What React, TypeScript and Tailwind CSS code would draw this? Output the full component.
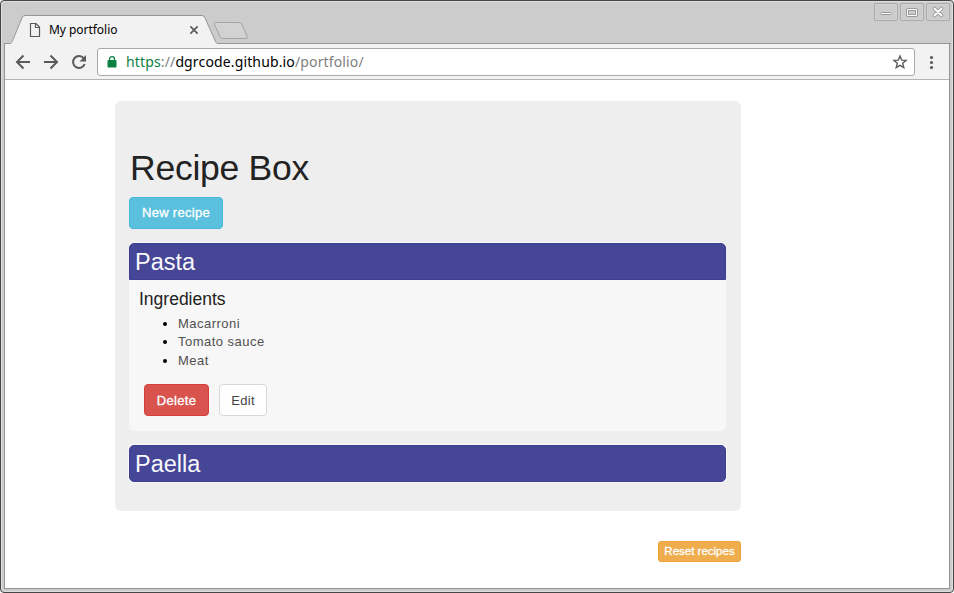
import React from 'react';

function WindowButton({ children }: { children: React.ReactNode }) {
  return (
    <div className="flex h-[18px] w-6 items-center justify-center rounded-[2px] border border-[#aaa] bg-[#ccc] shadow-[inset_0_0_0_1px_#d2d2d2]">
      <svg width="22" height="16" viewBox="0 0 22 16" fill="none">{children}</svg>
    </div>
  );
}

function TabStrip() {
  return (
    <div className="relative h-[43px] shrink-0 bg-[#ccc]">
      <svg className="absolute left-0 top-0" width="954" height="44" fill="none">
        <path d="M4 43.5H10.5L22.2 17.5Q23 15.5 25 15.5H202Q204 15.5 204.8 17.5L215.5 41.5Q216.2 43.5 218 43.5H951V44.5H4Z" fill="#f2f2f2" />
        <path d="M4 43.5H10Q11.500 43 12.200 41.500L22.200 17.500Q23 15.500 25 15.500H202Q204 15.500 204.800 17.500L215.500 41.500Q216.200 43.500 218 43.500H951" stroke="#949494" />
        <path d="M215.500 22.500H239Q241 22.500 242 24.500L247.300 36.500Q248 38.500 246 38.500H223Q221 38.500 220 36.500L214.500 24.500Q214 22.500 215.500 22.500Z" fill="#d2d2d2" stroke="#a3a3a3" />
        <path d="M30.500 23.500H36L39.500 27V36.500H30.500ZM35.500 23.500V27.500H39.500" stroke="#5a5a5a" strokeWidth="1.200" />
        <path d="M190.400 26.400L197.600 33.600M197.600 26.400L190.400 33.600" stroke="#5a5a5a" strokeWidth="1.700" />
      </svg>
      <div className="absolute left-[49px] top-[21px] font-['Noto_Sans',sans-serif] text-[12px] leading-[18px] tracking-[-0.040px] text-black">My portfolio</div>
      <div className="absolute right-[4px] top-[3px] flex gap-[2px]">
        <WindowButton><rect x="5.500" y="8.500" width="11" height="2" rx="1" fill="#fff" stroke="#999" /></WindowButton>
        <WindowButton>
          <rect x="5.500" y="4.500" width="11" height="8" rx="1.500" fill="#fff" stroke="#999" />
          <rect x="7.500" y="6.500" width="7" height="4" fill="#ccc" stroke="#999" />
        </WindowButton>
        <WindowButton>
          <path d="M7.500 4.500L14.500 11.500M14.500 4.500L7.500 11.500" stroke="#999" strokeWidth="3.800" strokeLinecap="round" />
          <path d="M7.500 4.500L14.500 11.500M14.500 4.500L7.500 11.500" stroke="#fff" strokeWidth="1.800" strokeLinecap="round" />
        </WindowButton>
      </div>
    </div>
  );
}

function Toolbar() {
  return (
    <div className="mx-1 flex h-[37px] shrink-0 items-start border-b border-[#b3b3b3] bg-[#f2f2f2] pt-[5px]">
      <svg className="h-7 w-[93px] shrink-0" viewBox="4 48 93 28" fill="none" stroke="#5a5a5a" strokeWidth="2">
        <path d="M30 62H17.500M23.500 55.500L17 62L23.500 68.500" />
        <path d="M44 62H56.500M50.500 55.500L57 62L50.500 68.500" />
        <path d="M83.800 58.300A6 6 0 1 0 84.700 64" />
        <path d="M86 55V61.500H79.500Z" fill="#5a5a5a" stroke="none" />
      </svg>
      <div className="flex h-7 w-[818px] shrink-0 items-center rounded-[3px] border border-[#a9a9a9] bg-white pl-[9px] pr-[6px]">
        <svg width="10" height="12" viewBox="0 0 10 12" className="mr-[9px] shrink-0">
          <rect x="0.500" y="4" width="9" height="7.500" rx="1" fill="#0b8043" />
          <path d="M2.500 5V3.200A2.500 2.500 0 0 1 7.500 3.200V5" fill="none" stroke="#0b8043" strokeWidth="1.300" />
        </svg>
        <div className="whitespace-nowrap font-['Noto_Sans',sans-serif] text-[14px] leading-5 tracking-[0.140px] text-[#808080]">
          <span className="text-[#0b8043]">https</span>://<span className="text-black">dgrcode.github.io</span>/portfolio/
        </div>
        <svg className="ml-auto shrink-0" width="16" height="16" viewBox="0 0 16 16" fill="none" stroke="#5a5a5a" strokeWidth="1.400">
          <path d="M8 2L9.700 6.100L14.100 6.400L10.700 9.300L11.800 13.600L8 11.300L4.200 13.600L5.300 9.300L1.900 6.400L6.300 6.100Z" />
        </svg>
      </div>
      <svg className="ml-[12px] shrink-0" width="10" height="28" fill="#5a5a5a">
        <circle cx="4.500" cy="9.500" r="1.600" /><circle cx="4.500" cy="14.500" r="1.600" /><circle cx="4.500" cy="19.500" r="1.600" />
      </svg>
    </div>
  );
}

function RecipeHeader({ title, open }: { title: string; open?: boolean }) {
  return (
    <h2 className={`h-[37px] border border-[#3d3d92] bg-[#464696] pl-[5px] text-[23.500px] leading-[36px] text-[#f8f8fc] ${open ? 'rounded-t-[5px] shadow-[0_-1px_0_0_#f8f8f8]' : 'rounded-[5px] shadow-[0_0_0_1px_#f8f8f8]'}`}>
      {title}
    </h2>
  );
}

export default function App() {
  return (
    <div className="relative flex h-[593px] w-[954px] flex-col overflow-hidden rounded-[4px] bg-[#ccc] font-['Liberation_Sans',Arial,sans-serif]">
      <TabStrip />
      <Toolbar />
      <main className="mx-[5px] h-[508px] shrink-0 bg-white pl-[110px] pt-[20.500px]">
        <section className="h-[410.500px] w-[626px] rounded-[6px] bg-[#eee] px-[14px] pt-[47px]">
          <h1 className="h-[40px] pl-[1px] text-[35.500px] leading-[40px] tracking-[-0.250px] text-[#222]">Recipe Box</h1>
          <button className="mt-[9px] block h-[32px] w-[94px] rounded-[4px] border border-[#46b8da] bg-[#5bc0de] text-[13px] leading-[30px] tracking-[0.300px] text-white [-webkit-text-stroke:0.300px_white]">New recipe</button>
          <div className="mt-[14px] h-[188px] w-[597px] rounded-[5px] bg-[#f7f7f7]">
            <RecipeHeader title="Pasta" open />
            <div className="pl-[10px] pt-[9px]">
              <h3 className="text-[17.500px] leading-5 text-[#222]">Ingredients</h3>
              <ul className="mt-[6px] list-disc pl-[39px] text-[13px] leading-[18.600px] tracking-[0.480px] text-[#505050] marker:text-black">
                <li>Macarroni</li><li>Tomato sauce</li><li>Meat</li>
              </ul>
              <div className="mt-[14px] flex gap-[10px] pl-[5px]">
                <button className="h-[32px] w-[65px] rounded-[4px] border border-[#d43f3a] bg-[#d9534f] text-[13px] tracking-[0.300px] text-white [-webkit-text-stroke:0.300px_white]">Delete</button>
                <button className="h-[32px] w-[48px] rounded-[4px] border border-[#d8d8d8] bg-white text-[13px] tracking-[0.300px] text-[#444]">Edit</button>
              </div>
            </div>
          </div>
          <div className="mt-[14px] w-[597px]"><RecipeHeader title="Paella" /></div>
        </section>
        <div className="mt-[30px] flex w-[626px] justify-end">
          <button className="h-[21px] w-[83px] rounded-[3px] border border-[#eea236] bg-[#f0ad4e] text-[11.500px] leading-[19px] text-white [-webkit-text-stroke:0.300px_white]">Reset recipes</button>
        </div>
      </main>
      <div className="pointer-events-none absolute inset-x-1 bottom-1 top-[43px] border border-t-0 border-[#949494]" />
      <div className="pointer-events-none absolute inset-0 rounded-[4px] border border-[#454545] shadow-[inset_0_0_0_1px_#dedede]" />
    </div>
  );
}
